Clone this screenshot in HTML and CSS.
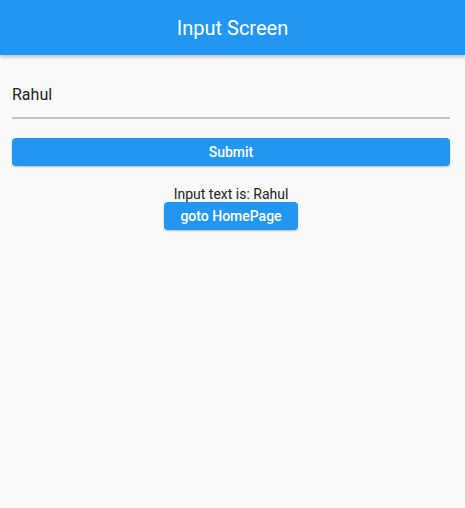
FILE: index.html
```html
<!DOCTYPE html>
<html>
<head>
<meta charset="utf-8">
<link rel="stylesheet" href="styles.css">
</head>
<body>
<header class="appbar"><h1 class="title">Input Screen</h1></header>
<main class="content">
  <div class="field"><span class="field-text">Rahul</span></div>
  <button class="btn btn-full">Submit</button>
  <div class="result">
    <p class="result-text">Input text is: Rahul</p>
    <button class="btn btn-small">goto HomePage</button>
  </div>
</main>
</body>
</html>
```
FILE: styles.css
```css
* { box-sizing: border-box; }
html, body { margin: 0; padding: 0; }
body {
  background: #fafafa;
  font-family: Roboto, "Noto Sans", sans-serif;
  width: 465px;
  height: 508px;
  overflow: hidden;
}
.appbar {
  height: 55px;
  background: #2196f3;
  display: flex;
  align-items: center;
  justify-content: center;
  box-shadow: 0 2px 4px rgba(0,0,0,0.25);
  position: relative;
}
.title {
  margin: 0;
  color: #fff;
  font-size: 20px;
  font-weight: 400;
}
.content {
  padding: 0 15px 0 12px;
}
.field {
  margin-top: 29px;
  height: 35px;
  border-bottom: 2px solid #c4c4c4;
  padding-top: 1px;
}
.field-text {
  font-size: 16px;
  color: #222;
}
.btn {
  background: #2196f3;
  color: #fff;
  border: none;
  border-radius: 4px;
  font-family: Roboto, "Noto Sans", sans-serif;
  font-size: 14px;
  font-weight: 500;
  height: 28px;
  padding: 0;
  box-shadow: 0 1px 2px rgba(0,0,0,0.25);
}
.btn-full {
  display: block;
  width: 100%;
  margin-top: 19px;
}
.result {
  display: flex;
  flex-direction: column;
  align-items: center;
  margin-top: 20px;
}
.result-text {
  margin: 0;
  font-size: 14px;
  color: #222;
  line-height: 16px;
}
.btn-small {
  width: 134px;
}
```
